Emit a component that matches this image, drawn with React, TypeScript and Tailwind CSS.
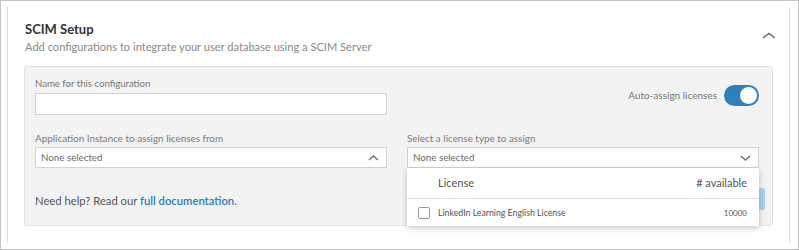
const font = { fontFamily: 'Lato, "Noto Sans", sans-serif' };

const Chevron = ({ up }: { up?: boolean }) => (
  <svg width="11" height="6" viewBox="0 0 11 6" aria-hidden>
    <polyline
      points={up ? '1,5 5.5,1 10,5' : '1,1 5.5,5 10,1'}
      fill="none"
      stroke="#707070"
      strokeWidth="1.4"
    />
  </svg>
);

const Toggle = () => (
  <div className="flex h-[21px] w-[35px] items-center justify-end rounded-full bg-[#2f7fc0] pr-[2px]">
    <div className="h-[17px] w-[17px] rounded-full bg-white" />
  </div>
);

const SelectBox = ({ open }: { open?: boolean }) => (
  <div className="flex h-[21px] w-[352px] items-center justify-between border border-[#d3d3d3] bg-white pl-[5px] pr-[7px]">
    <span className="text-[9.75px] text-[#6b6b6b]">None selected</span>
    <Chevron up={open} />
  </div>
);

const LicenseMenu = () => (
  <div className="absolute left-0 top-[21px] z-10 w-[352px] bg-white shadow-[0_2px_6px_rgba(0,0,0,0.22)]">
    <div className="flex h-[31px] items-center justify-between border-b border-[#dedede] pl-[31px] pr-[12px] text-[11px] text-[#555]">
      <span>License</span>
      <span># available</span>
    </div>
    <div className="flex h-[27px] items-center justify-between pl-[11px] pr-[12px]">
      <div className="flex items-center gap-[8px]">
        <div className="h-[12px] w-[12px] rounded-[2px] border border-[#9a9a9a] bg-white" />
        <span className="text-[8.75px] text-[#555]">LinkedIn Learning English License</span>
      </div>
      <span className="text-[8px] text-[#555]">10000</span>
    </div>
  </div>
);

export default function App() {
  return (
    <div
      className="h-[250px] w-[799px] border border-[#c4c4c4] bg-white pl-[6px] pr-[8px] pt-[6px]"
      style={font}
    >
      <div className="h-[236px] border-x border-[#dcdcdc] px-4 pt-[12px]">
        <div className="flex items-start justify-between pl-px">
          <div>
            <h2 className="text-[13px] font-bold leading-[20px] text-[#333]">SCIM Setup</h2>
            <p className="text-[11.1px] leading-[16px] text-[#8a8a8a]">
              Add configurations to integrate your user database using a SCIM Server
            </p>
          </div>
          <svg width="16" height="10" viewBox="0 0 16 10" className="mr-[-4px] mt-[12px]" aria-hidden>
            <polyline points="2,7 8,2.5 14,7" fill="none" stroke="#666" strokeWidth="1.5" />
          </svg>
        </div>

        <div className="mt-[11px] rounded-[3px] border border-[#e2e2e2] bg-[#f3f3f3] px-[10px] pb-[15px] pt-[10px]">
          <div className="flex items-start justify-between">
            <div className="w-[352px]">
              <label className="block text-[9.6px] leading-[14px] text-[#7a7a7a]">Name for this configuration</label>
              <div className="mt-[2px] h-[22px] border border-[#d3d3d3] bg-white" />
            </div>
            <div className="mr-[3px] mt-[8px] flex items-center gap-[7px]">
              <span className="text-[10px] text-[#777]">Auto-assign licenses</span>
              <Toggle />
            </div>
          </div>

          <div className="mt-[16px] flex gap-5">
            <div className="w-[352px]">
              <label className="block text-[9.9px] leading-[14px] text-[#7a7a7a]">
                Application Instance to assign licenses from
              </label>
              <div className="mt-[2px]">
                <SelectBox open />
              </div>
            </div>
            <div className="w-[352px]">
              <label className="block text-[9.9px] leading-[14px] text-[#7a7a7a]">
                Select a license type to assign
              </label>
              <div className="relative mt-[2px]">
                <SelectBox />
                <LicenseMenu />
              </div>
            </div>
          </div>

          <div className="mt-[20px] flex h-[22px] items-center justify-between">
            <p className="mt-[4px] text-[11.25px] leading-[16px] text-[#555]">
              Need help? Read our{' '}
              <a href="#" className="font-semibold text-[#2a7ab8]">
                full documentation
              </a>
              .
            </p>
            <button
              type="button"
              className="mr-[-3px] h-[22px] w-[90px] rounded-[2px] bg-[#a9d0ea] text-[11px] text-white"
            >
              Save
            </button>
          </div>
        </div>
      </div>
    </div>
  );
}
